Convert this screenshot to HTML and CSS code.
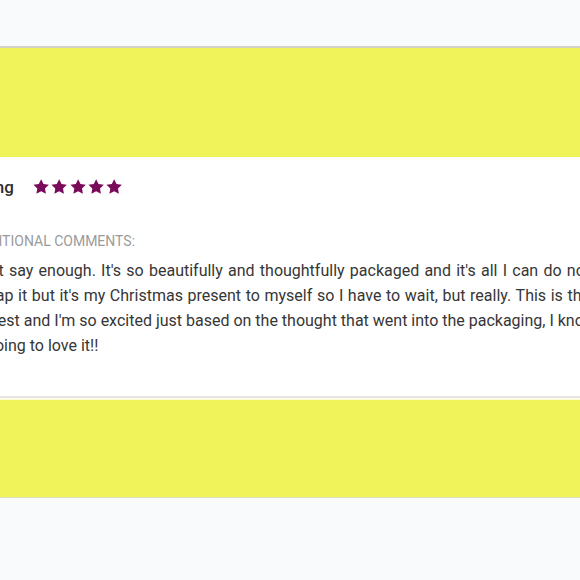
FILE: index.html
```html
<!DOCTYPE html>
<html lang="en">
<head>
<meta charset="utf-8">
<title>Review</title>
<link rel="stylesheet" href="styles.css">
</head>
<body>
  <div class="page">
    <div class="top-space"></div>
    <div class="band band-top"></div>
    <section class="card">
      <div class="card-inner">
        <div class="rating-row">
          <span class="rating-label">Rating</span>
          <span class="stars">
            <svg class="star" viewBox="0 0 24 24"><path d="M12 1.6l3.1 6.35 7 1-5.05 4.9 1.2 6.95L12 17.5l-6.25 3.3 1.2-6.95-5.05-4.9 7-1z"/></svg>
            <svg class="star" viewBox="0 0 24 24"><path d="M12 1.6l3.1 6.35 7 1-5.05 4.9 1.2 6.95L12 17.5l-6.25 3.3 1.2-6.95-5.05-4.9 7-1z"/></svg>
            <svg class="star" viewBox="0 0 24 24"><path d="M12 1.6l3.1 6.35 7 1-5.05 4.9 1.2 6.95L12 17.5l-6.25 3.3 1.2-6.95-5.05-4.9 7-1z"/></svg>
            <svg class="star" viewBox="0 0 24 24"><path d="M12 1.6l3.1 6.35 7 1-5.05 4.9 1.2 6.95L12 17.5l-6.25 3.3 1.2-6.95-5.05-4.9 7-1z"/></svg>
            <svg class="star" viewBox="0 0 24 24"><path d="M12 1.6l3.1 6.35 7 1-5.05 4.9 1.2 6.95L12 17.5l-6.25 3.3 1.2-6.95-5.05-4.9 7-1z"/></svg>
          </span>
        </div>
        <div class="comments-label">Additional comments:</div>
        <p class="comments">
          <span class="line">I can't say enough. It's so beautifully and thoughtfully packaged and it's all I can do not</span>
          <span class="line">unwrap it but it's my Christmas present to myself so I have to wait, but really. This is the</span>
          <span class="line">loveliest and I'm so excited just based on the thought that went into the packaging, I know</span>
          <span class="line">I'm going to love it!!</span>
        </p>
      </div>
    </section>
    <div class="band band-bottom"></div>
  </div>
</body>
</html>
```

FILE: styles.css
```css
html, body {
  margin: 0;
  padding: 0;
}

body {
  background: #f9fafb;
  font-family: Roboto, "Liberation Sans", sans-serif;
  overflow: hidden;
}

.page {
  width: 580px;
  height: 580px;
  overflow: hidden;
}

.top-space {
  height: 46px;
}

.band {
  background: #f0f35a;
}

.band-top {
  height: 109px;
  border-top: 2px solid #d2d2c8;
}

.card {
  background: #ffffff;
  height: 239px;
  overflow: hidden;
}

.card-inner {
  margin-left: -39px;
  padding-top: 18px;
}

.rating-row {
  display: flex;
  align-items: center;
  gap: 18px;
  height: 24px;
  margin-left: 4px;
}

.rating-label {
  font-size: 17px;
  font-weight: 500;
  color: #2e2e2e;
  white-space: nowrap;
}

.stars {
  display: flex;
}

.star {
  width: 18.3px;
  height: 18.3px;
  fill: #7a0b5a;
}

.comments-label {
  margin-top: 33px;
  margin-left: 10px;
  font-size: 14px;
  line-height: 18px;
  text-transform: uppercase;
  color: #9b9b9b;
  white-space: nowrap;
}

.comments {
  width: 629px;
  margin: 8px 0 0;
  font-size: 16px;
  line-height: 25px;
  color: #363636;
  text-align: justify;
}

.line {
  display: block;
  white-space: nowrap;
  text-align-last: justify;
}

.line:last-child {
  text-align-last: left;
}

.band-bottom {
  height: 99px;
  border-top: 2px solid #e6e6e6;
  border-bottom: 1px solid #dcdcb8;
  box-shadow: inset 0 2px 0 #fbfbe0;
}
```
